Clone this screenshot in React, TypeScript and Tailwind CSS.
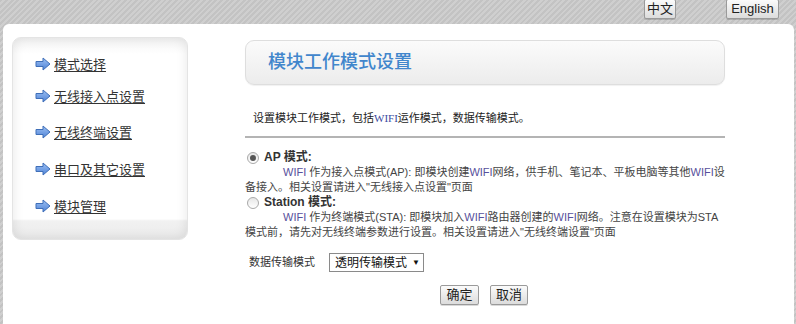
const menu = [
  { label: '模式选择', mt: 'mt-[18px]' },
  { label: '无线接入点设置', mt: 'mt-[16px]' },
  { label: '无线终端设置', mt: 'mt-[20px]' },
  { label: '串口及其它设置', mt: 'mt-[21px]' },
  { label: '模块管理', mt: 'mt-[21px]' },
];

function ArrowIcon() {
  return (
    <svg width="16" height="14" viewBox="0 0 16 14" className="shrink-0">
      <defs>
        <linearGradient id="arw" x1="0" y1="0" x2="0" y2="1">
          <stop offset="0" stopColor="#9cc0f4" />
          <stop offset="1" stopColor="#4f83d6" />
        </linearGradient>
      </defs>
      <path d="M1 4.5 H8 V1 L15 7 L8 13 V9.5 H1 Z" fill="url(#arw)" stroke="#3f6fb8" strokeWidth="1" strokeLinejoin="round" />
    </svg>
  );
}

function Radio({ checked }: { checked?: boolean }) {
  return (
    <span className="flex h-[12px] w-[12px] shrink-0 items-center justify-center rounded-full border border-[#a9a9a9] bg-[linear-gradient(to_bottom,#e6e6e6,#ffffff)]">
      {checked && <span className="h-[6px] w-[6px] rounded-full bg-[#555]" />}
    </span>
  );
}

function GrayButton({ children, className = '' }: { children: React.ReactNode; className?: string }) {
  return (
    <button
      className={`flex items-center justify-center whitespace-nowrap rounded-[2px] border border-[#9a9a9a] bg-[linear-gradient(to_bottom,#fbfbfb,#dcdcdc)] text-[13px] text-[#222] shadow-[0_1px_0_rgba(0,0,0,0.15)] ${className}`}
    >
      {children}
    </button>
  );
}

const W = () => <span className="text-[#57509c]">WIFI</span>;

export default function App() {
  return (
    <div className="h-[324px] w-[796px] overflow-hidden bg-[repeating-linear-gradient(135deg,#c3c3c3_0px,#c3c3c3_2px,#cfcfcf_2px,#cfcfcf_4px)] font-['Liberation_Sans','Noto_Sans_CJK_SC',sans-serif] text-[#333]">
      <div className="flex h-6 items-start justify-end pr-[17px]">
        <GrayButton className="mt-[-1px] h-[20px] w-[32px]">中文</GrayButton>
        <GrayButton className="ml-[50px] mt-[-1px] h-[20px] w-[53px]">English</GrayButton>
      </div>
      <div className="ml-[3px] mr-[2px] flex h-[300px] rounded-t-[6px] bg-white">
        <aside className="ml-[9px] mt-[13px] h-[203px] w-[176px] rounded-[9px] border border-[#e4e4e4] bg-[linear-gradient(to_bottom,#f4f4f4_0%,#ffffff_8%,#ffffff_90%,#f1f1f1_91%,#ebebeb_100%)] pl-[22px] shadow-[inset_0_0_12px_rgba(0,0,0,0.1)]">
          {menu.map((m) => (
            <div key={m.label} className={`${m.mt} flex h-[16px] items-center gap-[3px]`}>
              <ArrowIcon />
              <span className="text-[13px] leading-none text-[#333] underline underline-offset-2">{m.label}</span>
            </div>
          ))}
        </aside>
        <main className="ml-[57px] mt-4 w-[480px]">
          <div className="flex h-[45px] items-center rounded-[9px] border border-[#dedede] bg-[linear-gradient(to_bottom,#fbfbfb,#ececec)] pl-[22px] shadow-[0_1px_1px_rgba(0,0,0,0.06)]">
            <span className="text-[18px] font-medium text-[#4186cc]">模块工作模式设置</span>
          </div>
          <div className="mt-[26px] pl-[8px] text-[11px] leading-[15px] text-[#222]">
            设置模块工作模式，包括<span className="font-['Liberation_Serif'] text-[#3a4aa0]">WIFI</span>运作模式，数据传输模式。
          </div>
          <div className="mt-[10px] h-[2px] bg-[#b4b4b4]" />
          <div className="mt-[12px] text-[11px] leading-[15px] text-[#444]">
            <div className="flex h-[15px] items-center gap-[5px] pl-[2px]">
              <Radio checked />
              <span className="text-[12px] font-bold text-[#333]">AP 模式:</span>
            </div>
            <p className="indent-[38px]">
              <W /> 作为接入点模式(AP): 即模块创建<W />网络，供手机、笔记本、平板电脑等其他<W />设备接入。相关设置请进入"无线接入点设置"页面
            </p>
            <div className="flex h-[15px] items-center gap-[5px] pl-[2px]">
              <Radio />
              <span className="text-[12px] font-bold text-[#333]">Station 模式:</span>
            </div>
            <p className="indent-[38px]">
              <W /> 作为终端模式(STA): 即模块加入<W />路由器创建的<W />网络。注意在设置模块为STA模式前，请先对无线终端参数进行设置。相关设置请进入"无线终端设置"页面
            </p>
          </div>
          <div className="mt-[13px] flex items-center pl-[4px]">
            <span className="w-[80px] text-[11px] text-[#333]">数据传输模式</span>
            <div className="flex h-[19px] w-[95px] items-center whitespace-nowrap border border-[#8a8a8a] bg-white pl-[5px] text-[12px] text-[#111]">
              透明传输模式
              <span className="ml-[5px] text-[8px]">▼</span>
            </div>
          </div>
          <div className="mt-[13px] flex justify-center gap-[11px] pr-[2px]">
            <GrayButton className="h-[20px] w-[39px]">确定</GrayButton>
            <GrayButton className="h-[20px] w-[38px]">取消</GrayButton>
          </div>
        </main>
      </div>
    </div>
  );
}
